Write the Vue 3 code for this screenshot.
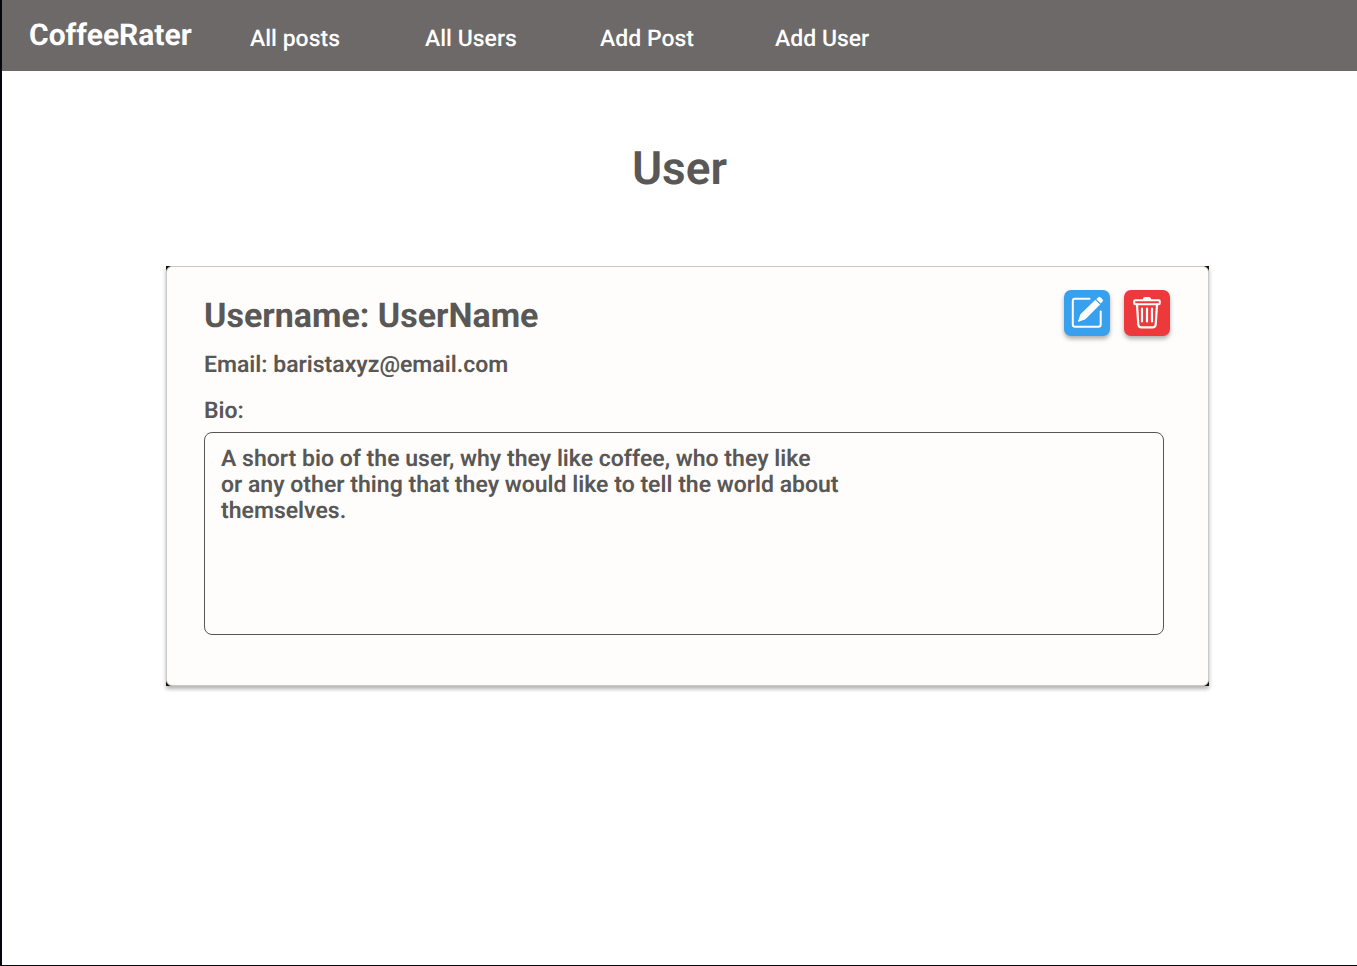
<script setup>
import { ref } from 'vue'

const links = ['All posts', 'All Users', 'Add Post', 'Add User']
const user = ref({
  name: 'UserName',
  email: 'baristaxyz@email.com',
  bio: 'A short bio of the user, why they like coffee, who they like\nor any other thing that they would like to tell the world about\nthemselves.',
})
</script>

<template>
  <div class="page">
    <header class="bar">
      <a class="brand" href="#">CoffeeRater</a>
      <nav class="nav">
        <a v-for="link in links" :key="link" class="link" href="#">{{ link }}</a>
      </nav>
    </header>

    <main class="main">
      <h1 class="title">User</h1>

      <section class="frame">
        <div class="card">
          <div class="head">
            <h2 class="name">Username: {{ user.name }}</h2>
            <div class="actions">
              <button class="action edit" type="button" aria-label="Edit user">
                <svg viewBox="0 0 46 46" fill="none">
                  <path d="M25.500 8.800H11Q8.800 8.800 8.800 11V34.500Q8.800 36.700 11 36.700H34.500Q36.700 36.700 36.700 34.500V21.500" stroke="#fff" stroke-width="2" stroke-linecap="round" />
                  <path d="M14.500 31.300L17 24.300L31.200 10.400L35.600 14.600L21.500 28.700Z" fill="#fff" stroke="#fff" stroke-width="1" stroke-linejoin="round" />
                  <path d="M32.300 9.300L34.300 7.300Q35.500 6.300 36.700 7.400L38.500 9.200Q39.600 10.500 38.500 11.700L36.700 13.500Z" fill="#fff" />
                </svg>
              </button>
              <button class="action remove" type="button" aria-label="Delete user">
                <svg viewBox="0 0 46 46" fill="none" stroke="#fff" stroke-linecap="round" stroke-linejoin="round">
                  <path d="M19.500 9.500Q19.500 7.500 21.500 7.500H24.500Q26.500 7.500 26.500 9.500Z" fill="#fff" stroke-width="1.200" />
                  <rect x="10.200" y="10.300" width="25.600" height="4" rx="1" stroke-width="2" />
                  <path d="M13 14.700L14.300 34.500Q14.600 37.400 17.500 37.400H28.500Q31.400 37.400 31.700 34.500L33 14.700" stroke-width="2.200" />
                  <path d="M18 18.700V31.500M23 18.700V31.500M28 18.700V31.500" stroke-width="2.200" />
                </svg>
              </button>
            </div>
          </div>
          <p class="email">Email: {{ user.email }}</p>
          <label class="label" for="bio">Bio:</label>
          <textarea id="bio" class="bio" readonly :value="user.bio"></textarea>
        </div>
      </section>
    </main>
  </div>
</template>

<style>
body {
  margin: 0;
}
</style>

<style scoped>
.page {
  box-sizing: border-box;
  min-height: 100vh;
  border-left: 2px solid #05050d;
  border-bottom: 1px solid #05050d;
  background: #fff;
  color: #595856;
  font-family: Roboto, "Liberation Sans", sans-serif;
  text-rendering: geometricPrecision;
}
.bar {
  display: flex;
  align-items: flex-start;
  box-sizing: border-box;
  height: 71px;
  padding: 18px 27px 0;
  background: #6d6968;
}
.brand {
  width: 221px;
  color: #fff;
  font-size: 30px;
  font-weight: 700;
  line-height: 36px;
  text-decoration: none;
}
.nav {
  display: flex;
}
.link {
  width: 175px;
  color: #fff;
  font-size: 23px;
  font-weight: 500;
  line-height: 42px;
  text-decoration: none;
}
.main {
  padding: 71px 148px 40px 164px;
}
.title {
  margin: 0 0 70px -16px;
  font-size: 46px;
  font-weight: 600;
  line-height: 54px;
  text-align: center;
}
.frame {
  background: #111;
  box-shadow: 0 3px 4px rgba(0, 0, 0, 0.3);
}
.card {
  padding: 23px 38px 50px 37px;
  border: 1px solid #cbc9c8;
  border-radius: 6px;
  background: #fffdfb;
}
.head {
  display: flex;
  align-items: center;
  justify-content: space-between;
}
.name {
  margin: 6px 0 0;
  font-size: 34px;
  font-weight: 700;
  line-height: 40px;
}
.actions {
  display: flex;
  gap: 14px;
}
.action {
  width: 46px;
  height: 46px;
  padding: 0;
  border: 0;
  border-radius: 7px;
  box-shadow: 0 3px 4px rgba(0, 0, 0, 0.3);
}
.action svg {
  display: block;
}
.edit {
  background: #38a0ec;
}
.remove {
  background: #ed393b;
}
.email {
  margin: 16px 0 20px;
  font-size: 23px;
  font-weight: 600;
  line-height: 26px;
}
.label {
  display: block;
  margin-bottom: 8px;
  font-size: 23px;
  font-weight: 600;
  line-height: 26px;
}
.bio {
  display: block;
  box-sizing: border-box;
  width: calc(100% - 6px);
  height: 203px;
  padding: 13px 16px;
  border: 1px solid #575656;
  border-radius: 8px;
  outline: 0;
  resize: none;
  background: transparent;
  color: inherit;
  font-family: inherit;
  font-size: 23px;
  font-weight: 600;
  line-height: 26px;
  text-rendering: inherit;
}
</style>
